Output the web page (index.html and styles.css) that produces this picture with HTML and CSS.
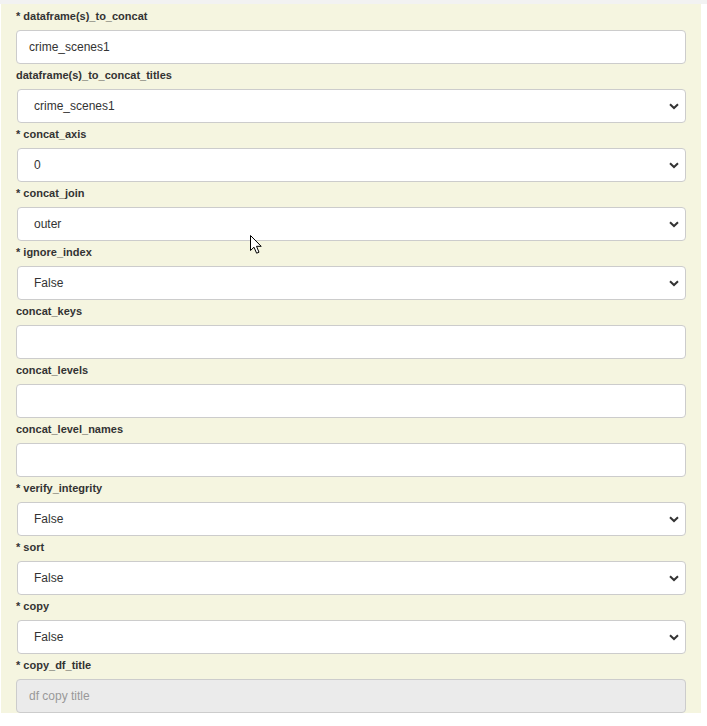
FILE: index.html
```html
<!DOCTYPE html>
<html>
<head>
<meta charset="utf-8">
<link rel="stylesheet" href="styles.css">
</head>
<body>
<div class="topbar"></div>
<div class="panel">
  <div class="field"><label>* dataframe(s)_to_concat</label><div class="input">crime_scenes1</div></div>
  <div class="field"><label>dataframe(s)_to_concat_titles</label><div class="input select">crime_scenes1<svg class="chev" viewBox="0 0 10 7"><path d="M1 1.2 L5 5 L9 1.2" /></svg></div></div>
  <div class="field"><label>* concat_axis</label><div class="input select">0<svg class="chev" viewBox="0 0 10 7"><path d="M1 1.2 L5 5 L9 1.2" /></svg></div></div>
  <div class="field"><label>* concat_join</label><div class="input select">outer<svg class="chev" viewBox="0 0 10 7"><path d="M1 1.2 L5 5 L9 1.2" /></svg></div></div>
  <div class="field"><label>* ignore_index</label><div class="input select">False<svg class="chev" viewBox="0 0 10 7"><path d="M1 1.2 L5 5 L9 1.2" /></svg></div></div>
  <div class="field"><label>concat_keys</label><div class="input"></div></div>
  <div class="field"><label>concat_levels</label><div class="input"></div></div>
  <div class="field"><label>concat_level_names</label><div class="input"></div></div>
  <div class="field"><label>* verify_integrity</label><div class="input select">False<svg class="chev" viewBox="0 0 10 7"><path d="M1 1.2 L5 5 L9 1.2" /></svg></div></div>
  <div class="field"><label>* sort</label><div class="input select">False<svg class="chev" viewBox="0 0 10 7"><path d="M1 1.2 L5 5 L9 1.2" /></svg></div></div>
  <div class="field"><label>* copy</label><div class="input select">False<svg class="chev" viewBox="0 0 10 7"><path d="M1 1.2 L5 5 L9 1.2" /></svg></div></div>
  <div class="field"><label>* copy_df_title</label><div class="input disabled">df copy title</div></div>
  <svg class="cursor" viewBox="0 0 13 20" width="13" height="20"><path d="M0.5 0.5 L0.5 15.5 L4 12.2 L6.6 18.2 L9 17.2 L6.5 11.3 L11.2 11.3 Z" fill="#fff" stroke="#000" stroke-width="1"/></svg>
</div>
</body>
</html>
```
FILE: styles.css
```css
html, body {
  margin: 0;
  padding: 0;
  background: #ffffff;
  font-family: "Liberation Sans", Arial, sans-serif;
}
.topbar {
  height: 4px;
  background: #f2f2f2;
}
.panel {
  position: relative;
  margin-left: 1px;
  width: 700px;
  height: 709px;
  overflow: hidden;
  background: #f5f5e0;
  box-sizing: border-box;
  padding: 6px 15px 0 15px;
}
.field {
  display: flex;
  flex-direction: column;
}
.field label {
  font-size: 11px;
  font-weight: bold;
  color: #333;
  line-height: 12px;
  margin-bottom: 8px;
}
.input {
  position: relative;
  height: 34px;
  box-sizing: border-box;
  border: 1px solid #cccccc;
  border-radius: 4px;
  background: #ffffff;
  margin-bottom: 5px;
  width: 670px;
  padding: 0 12px;
  font-size: 12px;
  color: #333;
  display: flex;
  align-items: center;
}
.select {
  width: 669px;
  margin-left: 1px;
  padding-left: 16px;
}
.disabled {
  background: #ebebeb;
  color: #999;
}
.chev {
  position: absolute;
  right: 6px;
  top: 13px;
  width: 10px;
  height: 7px;
}
.chev path {
  fill: none;
  stroke: #333;
  stroke-width: 2;
}
.cursor {
  position: absolute;
  left: 249px;
  top: 231px;
}
```
